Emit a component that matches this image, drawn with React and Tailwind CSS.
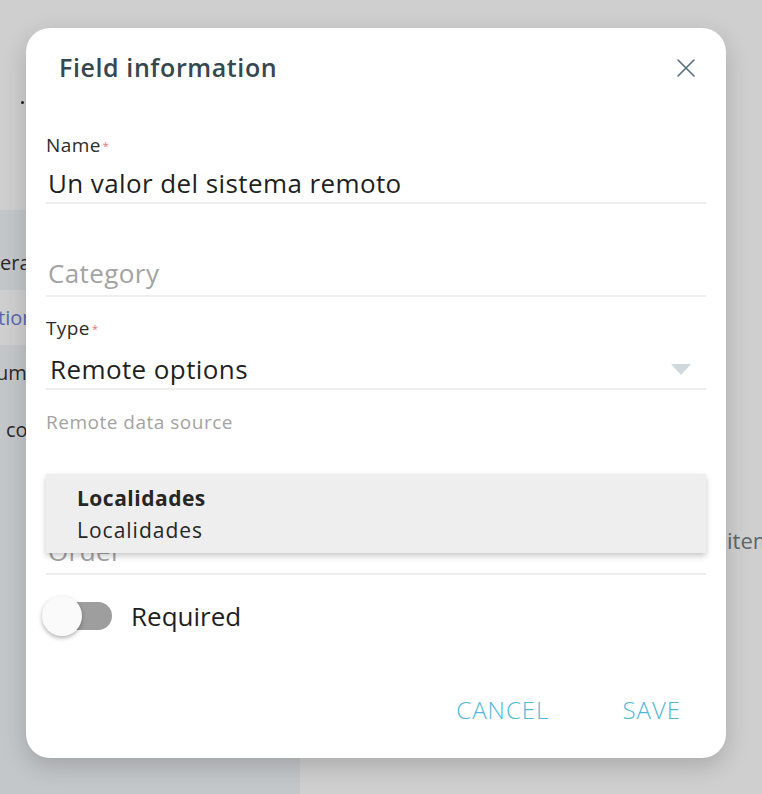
import React from 'react';

const font = { fontFamily: '"Open Sans", "Noto Sans", sans-serif' };

function Label({ children, required }) {
  return (
    <div className="h-[24px] leading-[24px] text-[19px] tracking-[0.4px] text-[#2b2b2b] flex items-center">
      {children}
      {required && <span className="text-[11px] leading-[11px] text-[#e57373] ml-[2px] mt-[1px]">*</span>}
    </div>
  );
}

function Backdrop() {
  return (
    <div className="absolute inset-0 flex flex-col bg-[#cfcfcf] text-[20px]" style={font}>
      <div className="h-[210px] relative">
        <span className="absolute left-[21px] top-[101px] w-[3px] h-[3px] rounded-full bg-[#222]" />
      </div>
      <div className="flex flex-1">
        <div className="w-[300px] bg-[#c4c7ca] pt-[25px] flex flex-col">
          <div className="h-[55px] flex items-center text-[#2a2a2a] whitespace-nowrap">eral</div>
          <div className="h-[55px] flex items-center bg-[#cfcfcf] text-[#5468b8] whitespace-nowrap ml-[-2px]">tions</div>
          <div className="h-[55px] flex items-center text-[#2a2a2a] whitespace-nowrap ml-[-4px]">umentos</div>
          <div className="h-[60px] flex items-center text-[#2a2a2a] whitespace-nowrap pl-[6px]">co</div>
        </div>
        <div className="flex-1 relative">
          <div className="absolute left-[427px] top-[314px] text-[22px] text-[#5b666e] whitespace-nowrap">items</div>
        </div>
      </div>
    </div>
  );
}

export default function App() {
  return (
    <div className="relative w-full h-[794px] overflow-hidden bg-[#cfcfcf]" style={font}>
      <Backdrop />
      <div className="absolute left-[26px] top-[28px] w-[700px] h-[730px] bg-white rounded-[24px] shadow-[0_8px_24px_rgba(0,0,0,0.18)] flex flex-col">
        <div className="h-[80px] flex items-center justify-between pl-[33px] pr-[30px]">
          <h2 className="text-[25px] font-semibold tracking-[0.6px] text-[#37474f]">Field information</h2>
          <svg width="20" height="20" viewBox="0 0 20 20" fill="none" stroke="#546e7a" strokeWidth="1.6" strokeLinecap="round">
            <path d="M2 2 L18 18 M18 2 L2 18" />
          </svg>
        </div>

        <div className="px-[20px] flex flex-col relative">
          <div className="mt-[25px]">
            <Label required>Name</Label>
          </div>
          <div className="pt-[8px] pb-[1px] border-b-2 border-[#eeeeee] pl-[2px]">
            <div className="h-[36px] leading-[36px] text-[26px] tracking-[0.4px] text-[#1f1f1f]">Un valor del sistema remoto</div>
          </div>

          <div className="mt-[51px] pb-[4px] border-b-2 border-[#eeeeee] pl-[2px]">
            <div className="h-[36px] leading-[36px] text-[26px] tracking-[0.4px] text-[#a3a3a3]">Category</div>
          </div>

          <div className="mt-[19px]">
            <Label required>Type</Label>
          </div>
          <div className="pt-[11px] pb-[1px] border-b-2 border-[#eeeeee] pl-[4px] flex items-center justify-between pr-[15px]">
            <div className="h-[36px] leading-[36px] text-[26px] tracking-[0.4px] text-[#1f1f1f]">Remote options</div>
            <svg width="20" height="11" viewBox="0 0 20 11">
              <path d="M0 0 L20 0 L10 11 Z" fill="#cfd8dc" />
            </svg>
          </div>

          <div className="mt-[20px] h-[24px] leading-[24px] text-[19px] tracking-[0.5px] text-[#a3a3a3]">Remote data source</div>
          <div className="pt-[11px] pb-[1px] border-b-2 border-[#eeeeee]">
            <div className="h-[36px]" />
          </div>

          <div className="mt-[49px] pb-[4px] border-b-2 border-[#eeeeee] pl-[2px]">
            <div className="h-[36px] leading-[36px] text-[26px] tracking-[0.4px] text-[#a3a3a3]">Order</div>
          </div>

          <div className="absolute left-[20px] right-[20px] top-[366px] h-[79px] bg-[#eeeeee] shadow-[0_3px_6px_rgba(0,0,0,0.22)] pl-[31px] flex flex-col justify-center">
            <div className="text-[21px] leading-[32px] font-bold tracking-[0.5px] text-[#262626]">Localidades</div>
            <div className="text-[21px] leading-[32px] tracking-[1px] text-[#262626]">Localidades</div>
          </div>

          <div className="mt-[21px] h-[40px] flex items-center">
            <div className="relative w-[70px] h-[40px] shrink-0 ml-[-4px]">
              <div className="absolute right-0 top-[6px] w-[56px] h-[28px] rounded-full bg-[#9e9e9e]" />
              <div className="absolute left-0 top-0 w-[40px] h-[40px] rounded-full bg-[#fafafa] shadow-[0_2px_4px_rgba(0,0,0,0.3)]" />
            </div>
            <span className="ml-[19px] text-[26px] text-[#1f1f1f]">Required</span>
          </div>
        </div>

        <div className="mt-auto h-[96px] flex items-center justify-end pr-[45px] gap-[73px] text-[24px] font-light tracking-[1px] text-[#4fb8d8]">
          <button className="uppercase">Cancel</button>
          <button className="uppercase">Save</button>
        </div>
      </div>
    </div>
  );
}
